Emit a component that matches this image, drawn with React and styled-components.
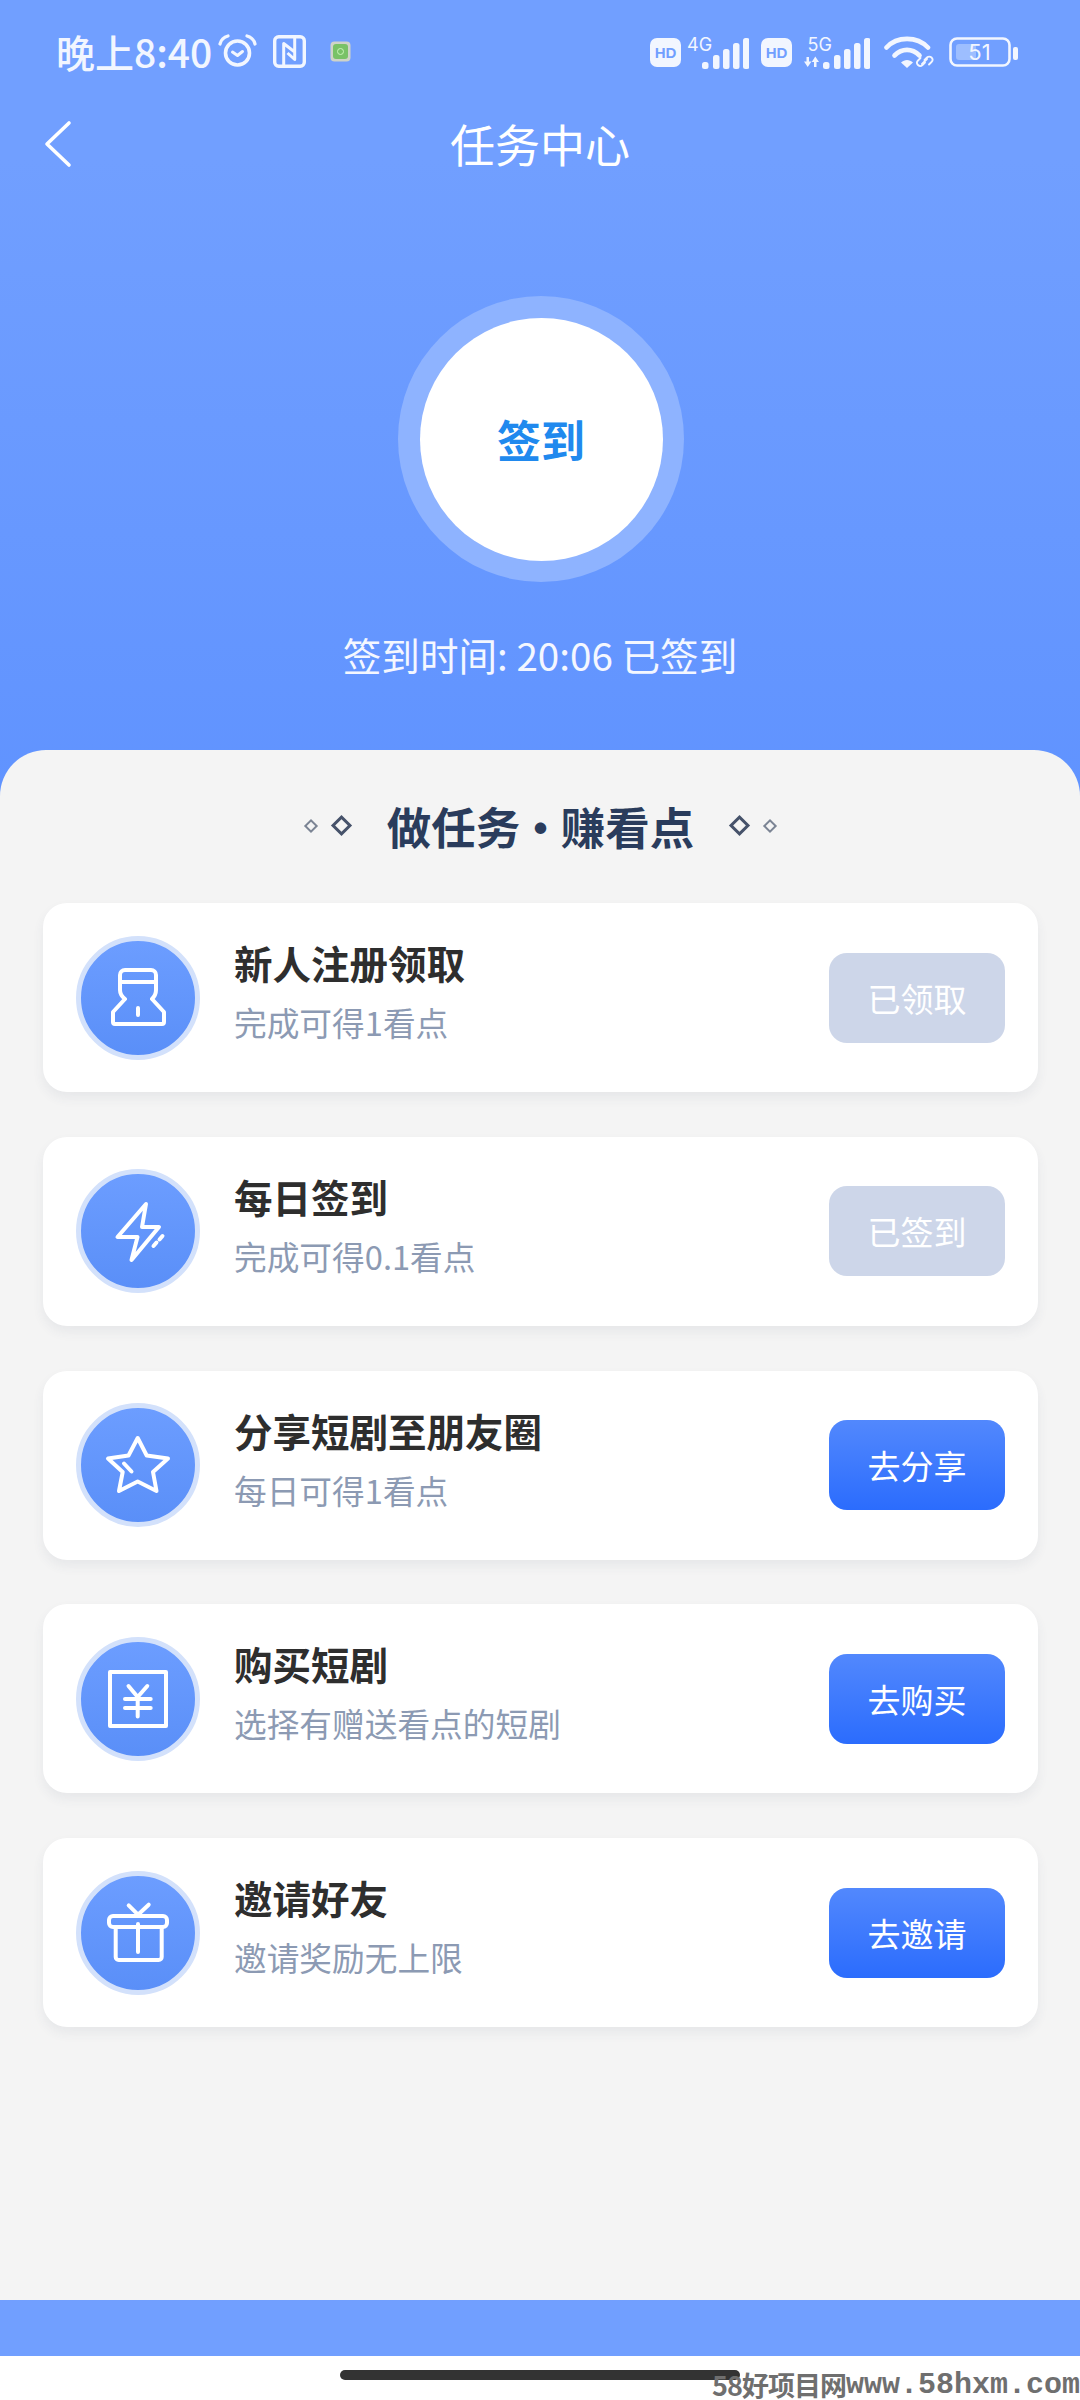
import React from "react";
import styled, { createGlobalStyle } from "styled-components";

const CJK = `"Noto Sans CJK SC", "Noto Sans", sans-serif`;

const Global = createGlobalStyle`
  html, body { margin: 0; padding: 0; background: #fff; }
  #root { width: 1080px; height: 2400px; }
  * { box-sizing: border-box; }
`;

const Page = styled.div`
  position: relative;
  width: 1080px;
  height: 2400px;
  overflow: hidden;
  display: flex;
  flex-direction: column;
  font-family: ${CJK};
  background: #fff;
`;

const Hero = styled.header`
  height: 796px;
  flex: none;
  background: linear-gradient(180deg, #719fff 0%, #719fff 20%, #6093ff 100%);
  color: #fff;
  display: flex;
  flex-direction: column;
`;

const StatusBar = styled.div`
  height: 102px;
  padding: 0 62px 0 56px;
  display: flex;
  align-items: center;
  justify-content: space-between;
`;

const StatusGroup = styled.div`
  display: flex;
  align-items: center;
  padding-top: ${(p) => p.$top || 0}px;
`;

const Clock = styled.span`
  font-family: "Noto Sans CJK SC", Roboto, sans-serif;
  font-size: 39px;
  font-weight: 500;
  line-height: 1;
  color: #f2f6ff;
  white-space: nowrap;
`;

const NavBar = styled.div`
  position: relative;
  height: 84px;
  display: flex;
  align-items: center;
  justify-content: center;
`;

const BackButton = styled.span`
  position: absolute;
  left: 43px;
  top: 18px;
  display: flex;
`;

const NavTitle = styled.h1`
  margin: 0;
  font-size: 45px;
  font-weight: 400;
  line-height: 84px;
`;

const SignRing = styled.div`
  width: 286px;
  height: 286px;
  margin: 110px 0 0 398px;
  border-radius: 50%;
  background: #8eb3ff;
  display: flex;
  align-items: center;
  justify-content: center;
`;

const SignDisc = styled.div`
  width: 243px;
  height: 243px;
  border-radius: 50%;
  background: #fff;
  display: flex;
  align-items: center;
  justify-content: center;
  color: #2089ee;
  font-size: 44px;
  font-weight: 700;
`;

const SignTime = styled.div`
  margin-top: 46px;
  text-align: center;
  font-size: 38.600px;
  line-height: 52px;
  font-weight: 400;
  color: #f4f7ff;
`;

const Panel = styled.main`
  flex: 1;
  margin-top: -46px;
  background: #f4f4f4;
  border-radius: 46px 46px 0 0;
  padding: 0 42px 0 43px;
  display: flex;
  flex-direction: column;
`;

const SectionHead = styled.div`
  height: 153px;
  padding-bottom: 2px;
  display: flex;
  align-items: center;
  justify-content: center;
  gap: 18px;
`;

const SectionTitle = styled.h2`
  margin: 0 20px;
  font-size: 44.500px;
  font-weight: 700;
  word-spacing: -12px;
  color: #2a3c5c;
  white-space: nowrap;
`;

const Diamond = styled.span`
  display: block;
  width: ${(p) => p.$size}px;
  height: ${(p) => p.$size}px;
  border: ${(p) => p.$w}px solid ${(p) => p.$color};
  transform: rotate(45deg);
`;

const TaskList = styled.div`
  display: flex;
  flex-direction: column;
  gap: 44.750px;
`;

const Card = styled.section`
  height: 189px;
  background: #fff;
  border-radius: 24px;
  box-shadow: 0 6px 12px rgba(60, 70, 100, 0.07);
  padding: 0 33px;
  display: flex;
  align-items: center;
`;

const Badge = styled.div`
  flex: none;
  width: 124px;
  height: 124px;
  border-radius: 50%;
  border: 5px solid #d3e1fb;
  background: linear-gradient(180deg, #6c9dff 0%, #5a8ff8 100%);
  display: flex;
  align-items: center;
  justify-content: center;
`;

const TaskText = styled.div`
  flex: 1;
  margin: 0 0 14px 34px;
  display: flex;
  flex-direction: column;
  gap: 13px;
`;

const TaskTitle = styled.div`
  font-size: 38.500px;
  line-height: 50px;
  font-weight: 700;
  color: #2e2e2e;
`;

const TaskSub = styled.div`
  font-size: 32.700px;
  line-height: 44px;
  font-weight: 400;
  color: #8c9ab3;
`;

const ActionButton = styled.div`
  flex: none;
  width: 176px;
  height: 90px;
  border-radius: 18px;
  display: flex;
  align-items: center;
  justify-content: center;
  font-size: 33px;
  font-weight: 400;
  color: #fff;
  background: ${(p) =>
    p.$done ? "#cdd6e9" : "linear-gradient(180deg, #5288fd 0%, #2b6cfd 100%)"};
`;

const FooterBar = styled.div`
  flex: none;
  height: 56px;
  background: #719fff;
`;

const GestureArea = styled.div`
  flex: none;
  height: 44px;
  background: #fff;
`;

const HomeIndicator = styled.div`
  position: absolute;
  left: 340px;
  top: 2370px;
  width: 400px;
  height: 10px;
  border-radius: 5px;
  background: #333;
`;

const Watermark = styled.div`
  position: absolute;
  right: 0;
  bottom: 0;
  display: flex;
  align-items: center;
  height: 30px;
  line-height: 30px;
  font-size: 27px;
  font-weight: 700;
  color: #6f6f6f;
  white-space: nowrap;
  letter-spacing: -1px;
`;

const WatermarkLatin = styled.span`
  font-family: "Liberation Mono", monospace;
  font-size: 30px;
  letter-spacing: 0;
`;

const Svg = ({ w, h, vb, children, style }) => (
  <svg width={w} height={h} viewBox={vb || `0 0 ${w} ${h}`} fill="none" style={{ display: "block", flex: "none", ...style }}>
    {children}
  </svg>
);

const ink = "#f2f6ff";

const Alarm = () => (
  <Svg w={39} h={34} style={{ marginLeft: 6 }}>
    <circle cx="19.500" cy="19" r="12" stroke={ink} strokeWidth="3.600" />
    <path d="M14.500 18l5 3.500 5-4" stroke={ink} strokeWidth="3" strokeLinecap="round" strokeLinejoin="round" />
    <path d="M2 10C3 6 6 3 10 2M37 10C36 6 33 3 29 2" stroke={ink} strokeWidth="3.200" strokeLinecap="round" />
  </Svg>
);

const Nfc = () => (
  <Svg w={33} h={33} style={{ marginLeft: 16 }}>
    <rect x="1.700" y="1.700" width="29.600" height="29.600" rx="4" stroke={ink} strokeWidth="3.400" />
    <path d="M10.700 32V8.500L21.700 17M21.700 1V24.500L14.500 18" stroke={ink} strokeWidth="3" strokeLinejoin="round" />
  </Svg>
);

const AppDot = () => (
  <Svg w={21} h={21} style={{ marginLeft: 24 }}>
    <rect x="0.500" y="0.500" width="20" height="20" rx="4" fill="#cfd3c8" />
    <rect x="3" y="3" width="15" height="15" rx="3" fill="#79c267" />
    <circle cx="10.500" cy="10.500" r="3" stroke="#c9f5b8" strokeWidth="1" />
  </Svg>
);

const HdBadge = ({ ml }) => (
  <Svg w={31} h={29} style={{ marginLeft: ml || 0 }}>
    <rect x="0" y="0" width="31" height="29" rx="7" fill={ink} />
    <text x="15.500" y="20" textAnchor="middle" fontFamily="Liberation Sans" fontSize="15" fontWeight="700" fill="#719fff">HD</text>
  </Svg>
);

const Bars = ({ x }) => {
  const items = [[0, 29], [11, 22], [21, 16], [31, 10], [41, 5]];
  return items.map(([dx, top]) => (
    <rect key={dx} x={x + dx} y={top} width="6.500" height={36 - top} rx="2.500" fill={ink} />
  ));
};

const Signal = ({ tech, arrows, ml }) => (
  <Svg w={arrows ? 67 : 62} h={36} style={{ marginLeft: ml, marginTop: -3 }}>
    <text x={arrows ? 4.500 : 0} y="18" fontFamily="Inter" fontSize="18" fill={ink}>{tech}</text>
    {arrows && (
      <path d="M2.500 24h2.500v4.500h2.500L3.700 34 0 28.500h2.500zM10 34h2.500v-5H15l-3.700-5.500L7.700 29H10z" fill={ink} transform="translate(1 0)" />
    )}
    <Bars x={arrows ? 20 : 15} />
  </Svg>
);

const Wifi = () => (
  <Svg w={50} h={35} style={{ marginLeft: 14 }}>
    <path d="M2.500 12.500C13 1 33 1 44 12.500" stroke={ink} strokeWidth="4.600" strokeLinecap="round" />
    <path d="M10.500 20.500C18 13 28 13 35.500 20.500" stroke={ink} strokeWidth="4.600" strokeLinecap="round" />
    <path d="M17 27.500c3.500-3.500 8.500-3.500 12 0L23 33z" fill={ink} />
    <path d="M38 29l5-5M40.500 25l2.500-2.500a3 3 0 0 1 4.500 4.500l-2.500 2.500M41 27.500L38.500 30a3 3 0 0 1-4.500-4.500L36.500 23" stroke={ink} strokeWidth="1.800" strokeLinecap="round" />
  </Svg>
);

const Battery = () => (
  <Svg w={69} h={30} style={{ marginLeft: 15 }}>
    <rect x="1.500" y="1.500" width="59" height="27" rx="6.500" stroke={ink} strokeWidth="2.600" />
    <rect x="7" y="7" width="20" height="16" rx="3" fill="#9dbeff" />
    <text x="30.500" y="23" textAnchor="middle" fontFamily="Inter" fontSize="22" fill={ink}>51</text>
    <rect x="64" y="10" width="5" height="13" rx="2" fill={ink} />
  </Svg>
);

const Chevron = () => (
  <Svg w={30} h={48}>
    <path d="M26 3L4 24l22 21" stroke="#fff" strokeWidth="3.600" strokeLinecap="round" strokeLinejoin="round" />
  </Svg>
);

const stroke = { stroke: "#fff", strokeWidth: 4, strokeLinecap: "round", strokeLinejoin: "round" };

const PersonIcon = () => (
  <path {...stroke} d="M18 20v-7a5 5 0 0 1 5-5h26a5 5 0 0 1 5 5v7zM18 20v8q0 5 5 9L11 50v10a2 2 0 0 0 2 2h47a2 2 0 0 0 2-2V50L50 37q4-4 4-9v-8M36 46v7" />
);
const BoltIcon = () => (
  <path {...stroke} d="M44 9L15.500 42h20L29.500 65 57 32H40zM51.500 51l3-3.500M57.500 44.500l3-3.500" />
);
const StarIcon = () => (
  <path {...stroke} d="M35.700 9l9 17.500L66 29.500 51 43l3.500 19-18.800-9.500L17 62l3.700-19L6 29.500l20.500-3zM22 34.500l7.500 8" />
);
const YuanIcon = () => (
  <path {...stroke} d="M8 9h56v54H8zM26.500 23l9.200 11 9.600-11M23 36h25.700M23 45h25.700M35.700 36v17.500" />
);
const GiftIcon = () => (
  <>
    <rect {...stroke} x="7" y="19" width="58" height="11" rx="4" />
    <path {...stroke} d="M13.700 30v30a3 3 0 0 0 3 3h40a3 3 0 0 0 3-3V30M36 27v28M26.700 8.300l9.300 9.400 10.700-10" />
  </>
);

const tasks = [
  { title: "新人注册领取", sub: "完成可得1看点", action: "已领取", done: true, Icon: PersonIcon },
  { title: "每日签到", sub: "完成可得0.1看点", action: "已签到", done: true, Icon: BoltIcon },
  { title: "分享短剧至朋友圈", sub: "每日可得1看点", action: "去分享", Icon: StarIcon },
  { title: "购买短剧", sub: "选择有赠送看点的短剧", action: "去购买", Icon: YuanIcon },
  { title: "邀请好友", sub: "邀请奖励无上限", action: "去邀请", Icon: GiftIcon },
];

export default function App() {
  return (
    <Page>
      <Global />
      <Hero>
        <StatusBar>
          <StatusGroup>
            <Clock>晚上8:40</Clock>
            <Alarm />
            <Nfc />
            <AppDot />
          </StatusGroup>
          <StatusGroup $top={2}>
            <HdBadge />
            <Signal tech="4G" ml={6} />
            <HdBadge ml={12} />
            <Signal tech="5G" arrows ml={11} />
            <Wifi />
            <Battery />
          </StatusGroup>
        </StatusBar>
        <NavBar>
          <BackButton><Chevron /></BackButton>
          <NavTitle>任务中心</NavTitle>
        </NavBar>
        <SignRing>
          <SignDisc>签到</SignDisc>
        </SignRing>
        <SignTime>签到时间: 20:06 已签到</SignTime>
      </Hero>
      <Panel>
        <SectionHead>
          <Diamond $size={10} $w={2} $color="#7b8494" />
          <Diamond $size={15} $w={3} $color="#46526a" />
          <SectionTitle>做任务 • 赚看点</SectionTitle>
          <Diamond $size={15} $w={3} $color="#46526a" />
          <Diamond $size={10} $w={2} $color="#7b8494" />
        </SectionHead>
        <TaskList>
          {tasks.map(({ title, sub, action, done, Icon }) => (
            <Card key={title}>
              <Badge>
                <Svg w={72} h={72}><Icon /></Svg>
              </Badge>
              <TaskText>
                <TaskTitle>{title}</TaskTitle>
                <TaskSub>{sub}</TaskSub>
              </TaskText>
              <ActionButton $done={done}>{action}</ActionButton>
            </Card>
          ))}
        </TaskList>
      </Panel>
      <FooterBar />
      <GestureArea />
      <HomeIndicator />
      <Watermark>
        58好项目网<WatermarkLatin>www.58hxm.com</WatermarkLatin>
      </Watermark>
    </Page>
  );
}
